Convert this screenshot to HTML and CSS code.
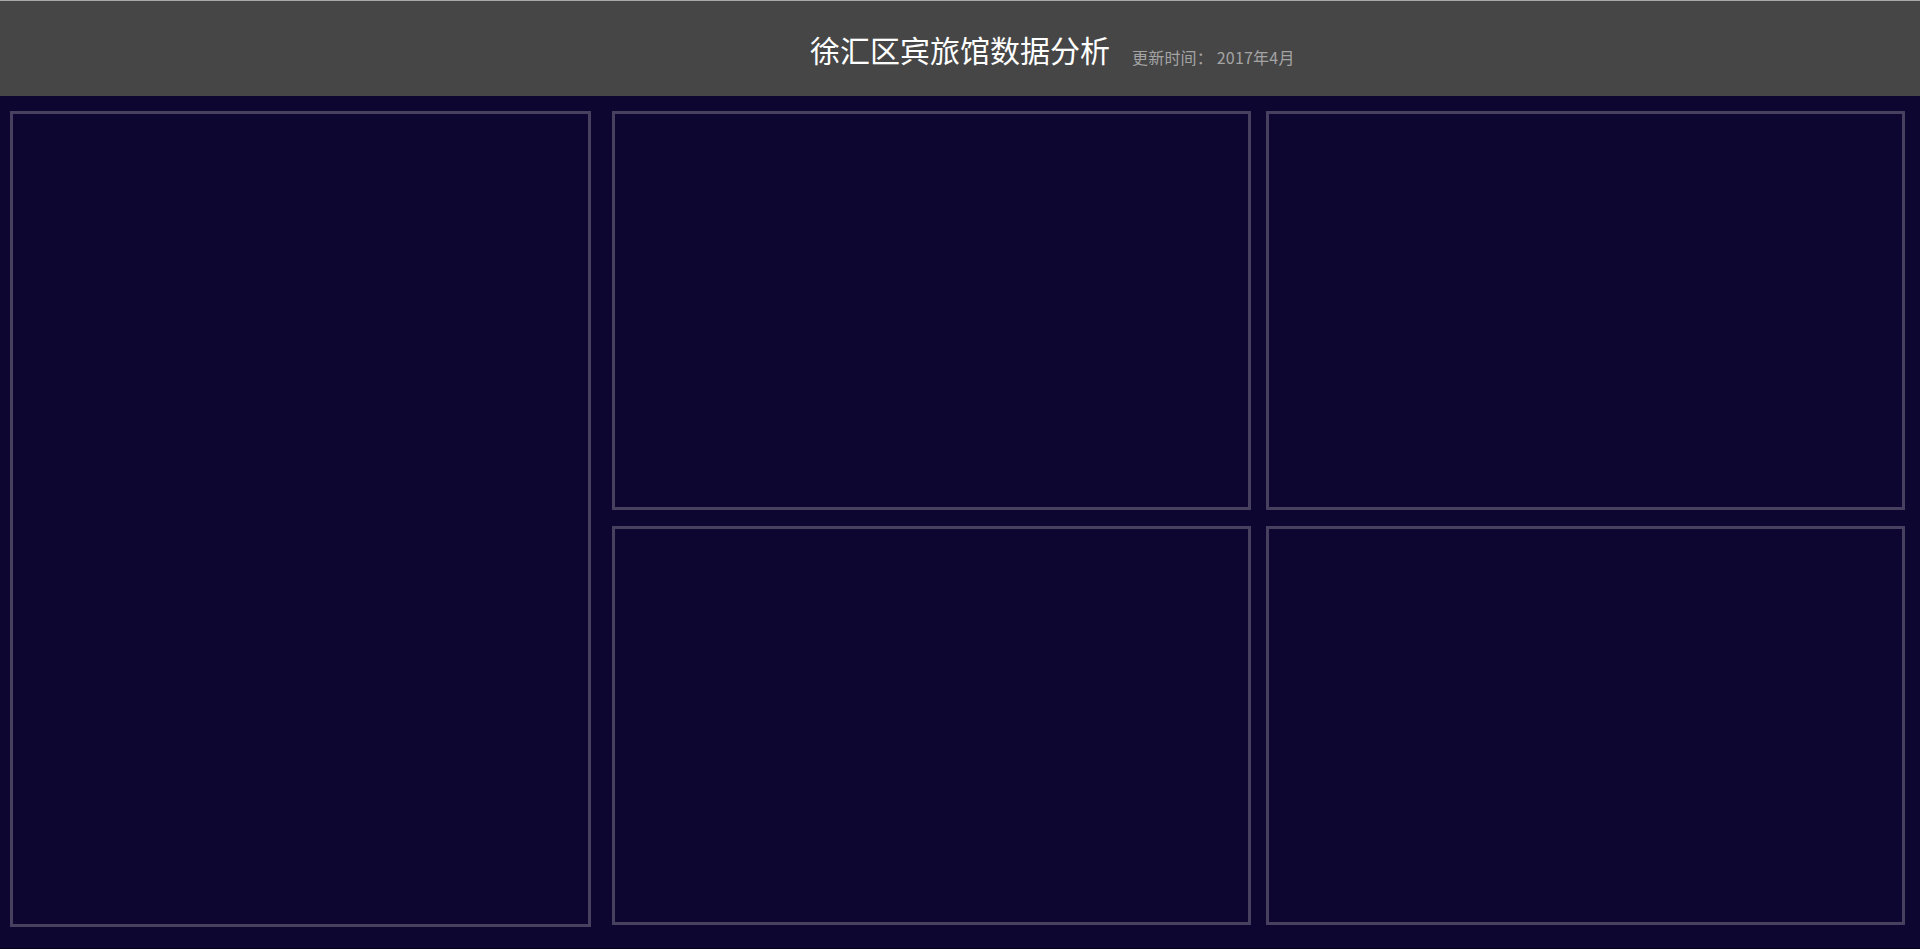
FILE: index.html
```html
<!DOCTYPE html>
<html lang="zh-CN">
<head>
<meta charset="utf-8">
<title>徐汇区宾旅馆数据分析</title>
<link rel="stylesheet" href="styles.css">
</head>
<body>
<div class="page">
  <header class="header">
    <div class="header-side"></div>
    <h1 class="title">徐汇区宾旅馆数据分析</h1>
    <div class="header-side">
      <span class="update">更新时间： 2017年4月</span>
    </div>
  </header>
  <main class="board">
    <section class="panel panel-left"></section>
    <section class="panel panel-a"></section>
    <section class="panel panel-b"></section>
    <section class="panel panel-c"></section>
    <section class="panel panel-d"></section>
  </main>
</div>
</body>
</html>
```
FILE: styles.css
```css
html {
  background: #050218;
}
body {
  margin: 0;
  font-family: "Noto Sans CJK SC", "Noto Sans", sans-serif;
}
.page {
  height: 948px;
  background: #0c0630;
  overflow: hidden;
}
.header {
  box-sizing: border-box;
  height: 96px;
  border-top: 1px solid #a8a8a8;
  background: #464646;
  display: grid;
  grid-template-columns: 1fr auto 1fr;
  align-items: center;
}
.title {
  margin: 0;
  font-size: 30px;
  font-weight: normal;
  color: #ffffff;
  line-height: 40px;
}
.update {
  display: inline-block;
  margin-left: 22px;
  margin-top: 17px;
  font-size: 16px;
  color: #a4a4a4;
  letter-spacing: 0.2px;
}
.board {
  display: grid;
  grid-template-columns: 587px 639px 639px;
  grid-template-rows: 399px 399px;
  column-gap: 15px;
  row-gap: 16px;
  padding: 15px 0 0 10px;
}
.panel {
  box-sizing: border-box;
  border: 3px solid #48405f;
  background: #0c0630;
}
.panel-left {
  grid-column: 1;
  grid-row: 1 / span 2;
  width: 581px;
  height: 816px;
}
.panel-a { grid-column: 2; grid-row: 1; }
.panel-b { grid-column: 3; grid-row: 1; }
.panel-c { grid-column: 2; grid-row: 2; }
.panel-d { grid-column: 3; grid-row: 2; }
```
